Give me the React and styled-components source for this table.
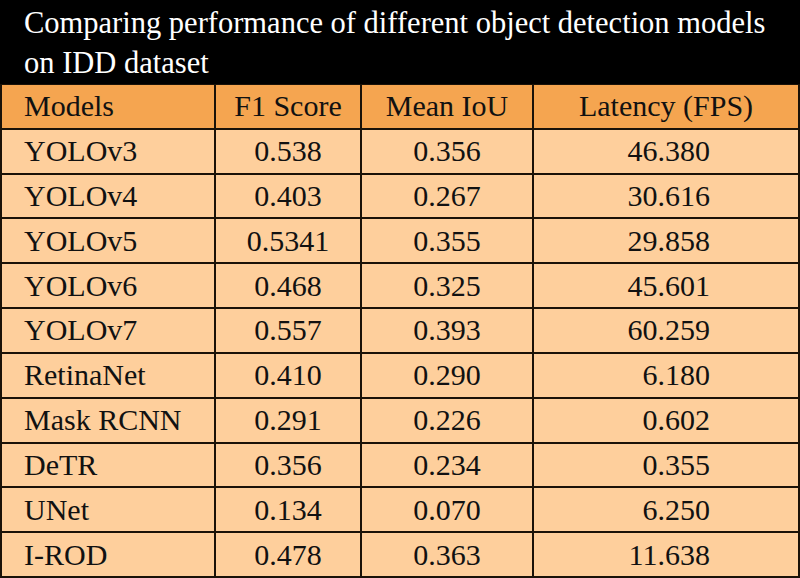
import { Fragment } from 'react';
import styled, { createGlobalStyle } from 'styled-components';

const GlobalStyle = createGlobalStyle`
  html, body {
    margin: 0;
    padding: 0;
    background: #000;
  }
`;

const serif = `"Liberation Serif", "Times New Roman", serif`;

const rows = [
  ['YOLOv3', '0.538', '0.356', '46.380'],
  ['YOLOv4', '0.403', '0.267', '30.616'],
  ['YOLOv5', '0.5341', '0.355', '29.858'],
  ['YOLOv6', '0.468', '0.325', '45.601'],
  ['YOLOv7', '0.557', '0.393', '60.259'],
  ['RetinaNet', '0.410', '0.290', '6.180'],
  ['Mask RCNN', '0.291', '0.226', '0.602'],
  ['DeTR', '0.356', '0.234', '0.355'],
  ['UNet', '0.134', '0.070', '6.250'],
  ['I-ROD', '0.478', '0.363', '11.638'],
];

const headers = ['Models', 'F1 Score', 'Mean IoU', 'Latency (FPS)'];

const Page = styled.div`
  width: 800px;
  height: 578px;
  background: #000;
  overflow: hidden;
  font-family: ${serif};
`;

const Title = styled.h1`
  margin: 0;
  height: 84px;
  box-sizing: border-box;
  padding: 3px 10px 0 24px;
  color: #fff;
  font-family: ${serif};
  font-weight: 400;
  font-size: 30.5px;
  line-height: 40px;
  white-space: nowrap;
`;

const Grid = styled.div`
  display: grid;
  grid-template-columns: 212px 144px 170px 264px;
  grid-auto-rows: 1fr;
  gap: 2px;
  height: 494px;
  box-sizing: border-box;
  padding: 1px 2px 2px 2px;
  background: #1a1208;
`;

const Cell = styled.div`
  display: flex;
  align-items: center;
  justify-content: ${(p) =>
    p.$align === 'left' ? 'flex-start' : p.$align === 'right' ? 'flex-end' : 'center'};
  padding: ${(p) =>
    p.$align === 'left' ? '0 0 0 22px' : p.$align === 'right' ? '0 88px 0 0' : '0'};
  background: ${(p) => (p.$head ? '#f5a550' : '#fecf9c')};
  color: #111;
  font-family: ${serif};
  font-size: 30px;
  white-space: nowrap;
`;

export default function App() {
  return (
    <Page>
      <GlobalStyle />
      <Title>
        Comparing performance of different object detection models
        <br />
        on IDD dataset
      </Title>
      <Grid>
        {headers.map((h, i) => (
          <Cell key={h} $head $align={i === 0 ? 'left' : 'center'}>
            {h}
          </Cell>
        ))}
        {rows.map(([model, f1, iou, fps]) => (
          <Fragment key={model}>
            <Cell $align="left">{model}</Cell>
            <Cell>{f1}</Cell>
            <Cell>{iou}</Cell>
            <Cell $align="right">{fps}</Cell>
          </Fragment>
        ))}
      </Grid>
    </Page>
  );
}
